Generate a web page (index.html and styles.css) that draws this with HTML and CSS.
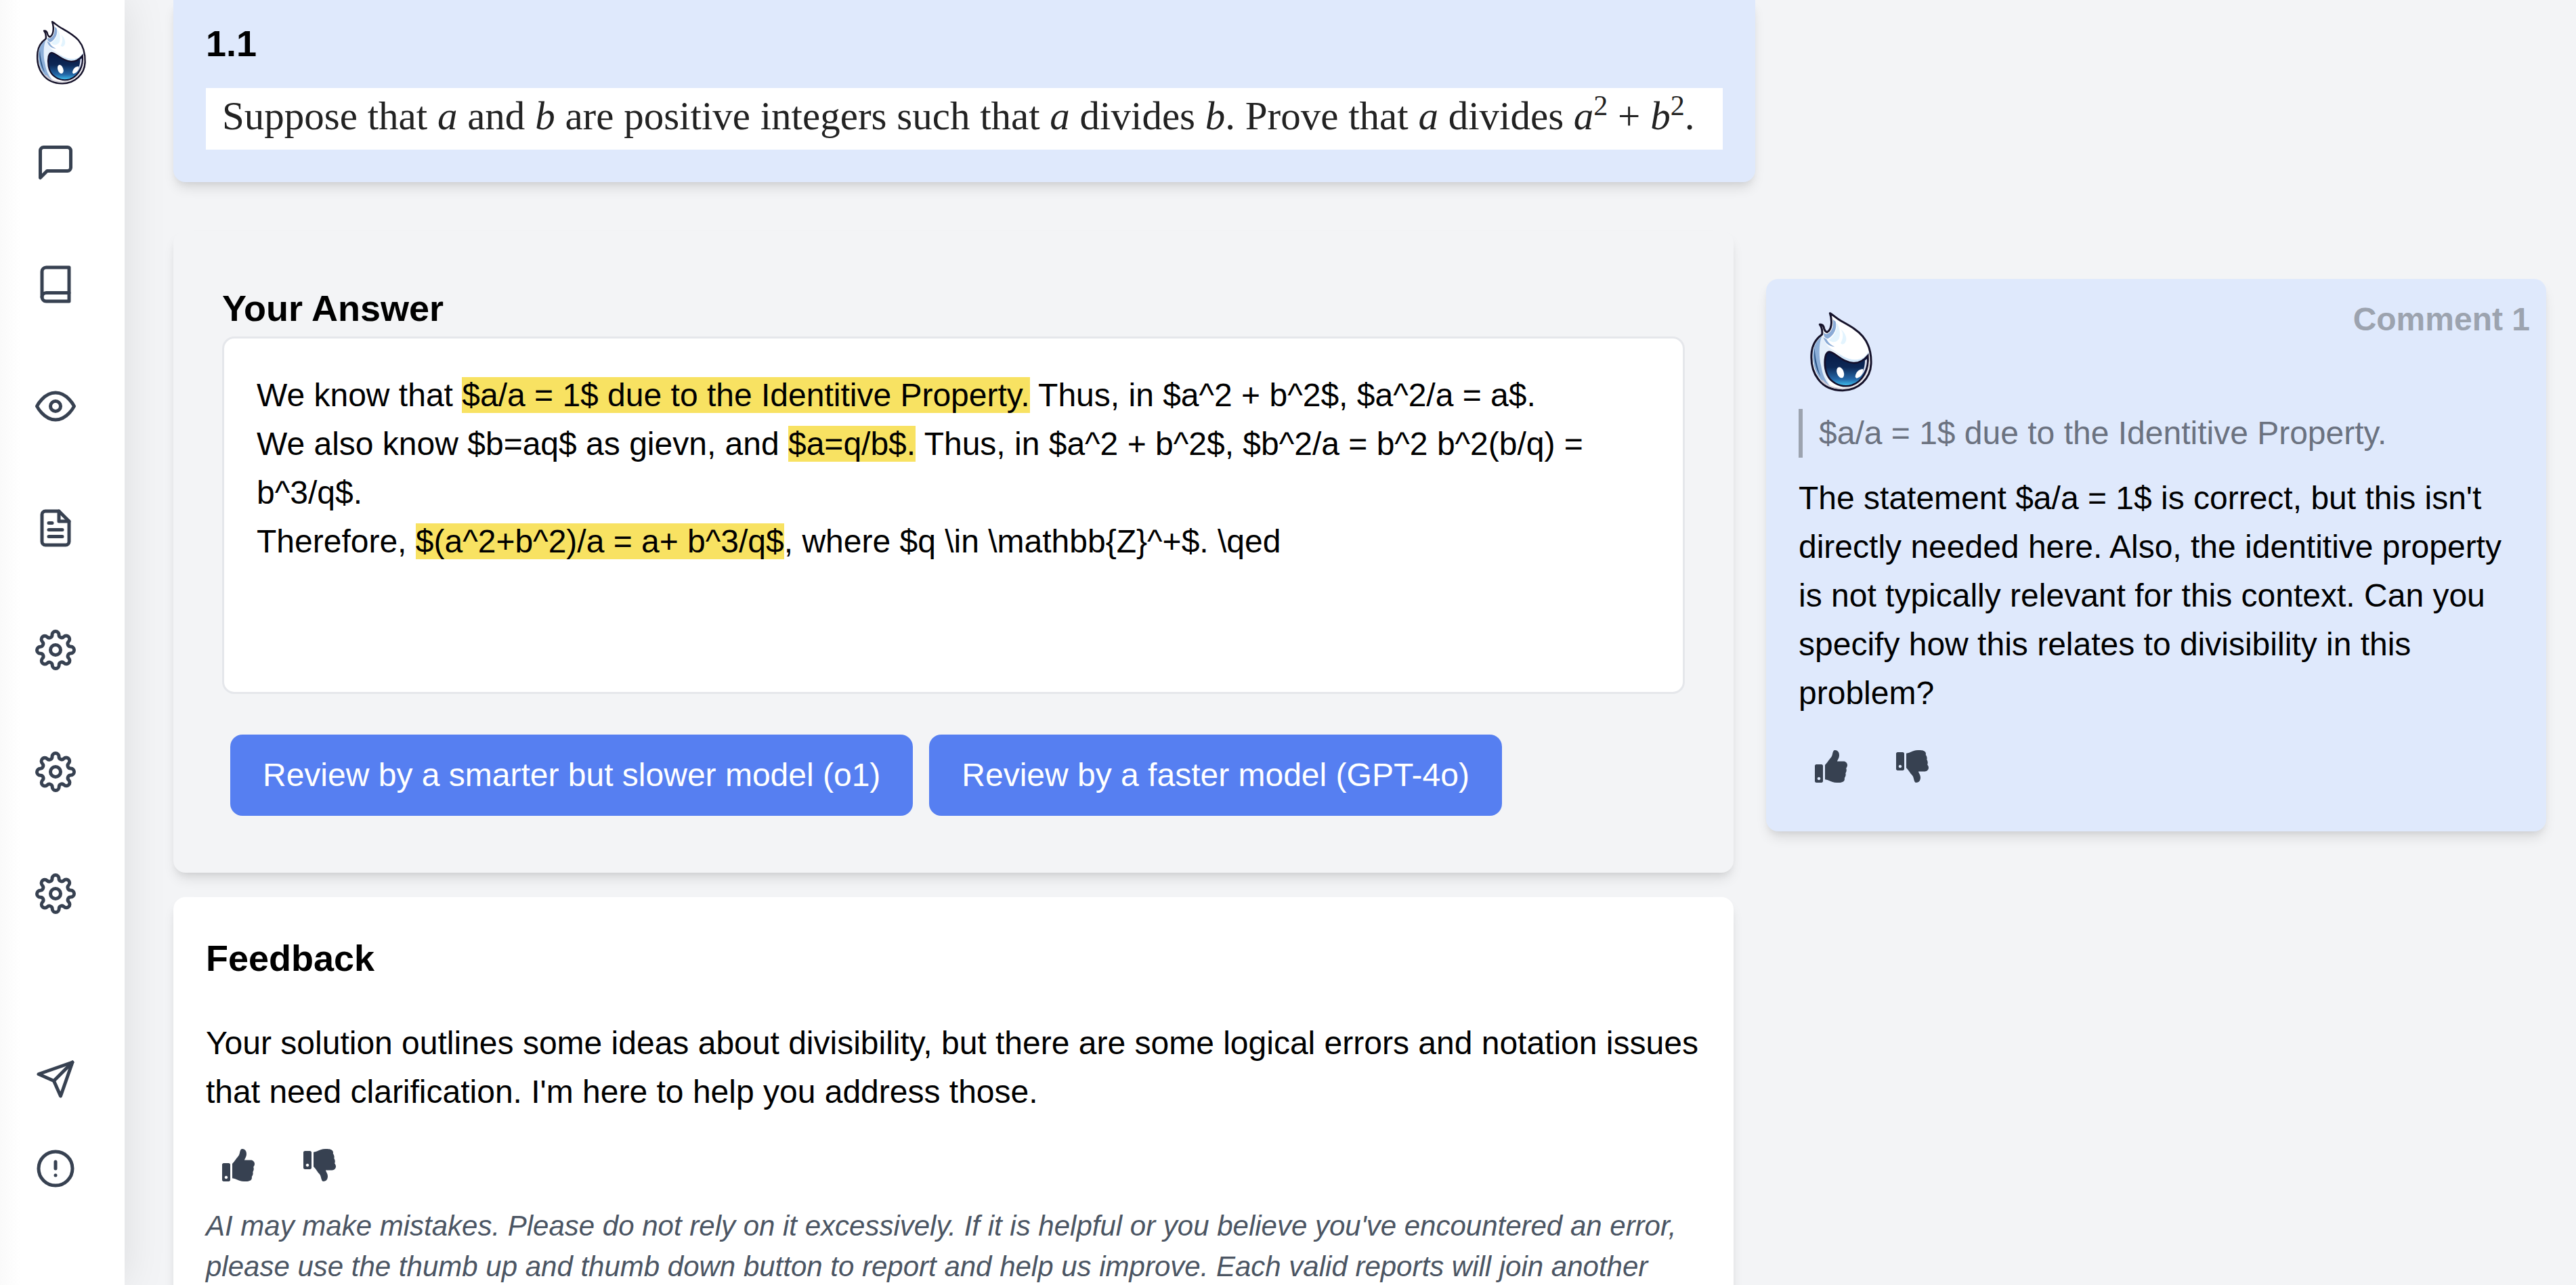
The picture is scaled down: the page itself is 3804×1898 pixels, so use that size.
FILE: index.html
```html
<!DOCTYPE html>
<html lang="en">
<head>
  <meta charset="UTF-8">
  <title>Problem 1.1</title>
  <link rel="stylesheet" href="styles.css">
</head>
<body>
  <!-- Shared drawings -->
  <svg class="defs" width="0" height="0" aria-hidden="true">
    <defs>
      <linearGradient id="visor" x1="0" y1="0" x2="0" y2="1">
        <stop offset="0" stop-color="#081a45"/>
        <stop offset="0.45" stop-color="#0d2856"/>
        <stop offset="0.8" stop-color="#2468a8"/>
        <stop offset="1" stop-color="#41c4f2"/>
      </linearGradient>
      <symbol id="logo" viewBox="48 63 360 360">
        <path d="M187 71C203 80 215 93 236 105C275 127 306 143 332 173C358 204 371 247 369 296C366 360 314 413 243 413C190 413 159 395 135 363C110 331 101 288 106 241C110 208 126 184 152 165C154 148 150 132 142 121C152 120 159 127 161 139C163 147 168 153 174 155C192 147 200 112 187 71Z" fill="#ffffff" stroke="#15122a" stroke-width="9" stroke-linejoin="round"/>
        <path d="M152 172C128 192 115 213 112 244C108 290 121 334 145 363C157 379 172 388 190 395C167 374 156 340 157 300C157 262 155 216 152 172Z" fill="#8caed8"/>
        <path d="M152 172C138 200 136 262 148 306C154 344 166 370 190 396C172 364 163 330 162 296C160 258 170 240 186 238C202 238 212 244 224 254C206 232 188 230 176 214C162 198 158 188 160 170Z" fill="#e4effb"/>
        <path d="M119 226C113 264 121 316 146 352C130 310 121 266 119 226Z" fill="#2c5687"/>
        <path d="M200 98C204 128 196 154 174 163C168 164 162 160 160 156C158 172 164 182 178 184C204 170 220 138 212 108Z" fill="#8aabd6"/>
        <path d="M158 178C166 206 182 216 208 220C190 212 178 200 172 186Z" fill="#8aabd6"/>
        <path d="M216 112C222 144 206 174 180 190C196 202 214 202 226 186C236 168 230 132 216 112Z" fill="#e3f4fe"/>
        <path d="M234 142C248 158 246 184 234 204C246 216 260 202 259 182C257 164 246 150 234 142Z" fill="#e3f4fe"/>
        <path d="M204 236C232 254 262 276 298 277C330 277 348 260 358 240C360 250 358 260 350 272C334 290 304 296 276 288C244 280 224 250 204 236Z" fill="#d2e8fa"/>
        <path d="M184 242C212 244 236 286 290 291C320 293 340 276 355 258C360 318 336 372 284 390C250 400 214 390 188 364C166 340 160 296 167 262C171 248 176 242 184 242Z" fill="url(#visor)" stroke="#130f2b" stroke-width="8"/>
        <path d="M342 280C342 304 336 332 316 356C340 338 352 308 351 274Z" fill="#dcdfee"/>
        <path d="M142 366C182 416 272 420 322 376C346 354 362 320 364 284C350 366 298 403 240 402C198 401 174 388 158 368Z" fill="#cdc9d4"/>
        <ellipse cx="233" cy="334" rx="15" ry="25" transform="rotate(-20 233 334)" fill="#ffffff"/>
        <path d="M299 353C300 334 314 318 334 318C334 338 320 358 304 359Z" fill="#ffffff"/>
      </symbol>
      <symbol id="gear" viewBox="0 0 24 24">
        <circle cx="12" cy="12" r="3"/>
        <path d="M19.4 15a1.65 1.65 0 0 0 .33 1.82l.06.06a2 2 0 0 1 0 2.83 2 2 0 0 1-2.83 0l-.06-.06a1.65 1.65 0 0 0-1.82-.33 1.65 1.65 0 0 0-1 1.51V21a2 2 0 0 1-2 2 2 2 0 0 1-2-2v-.09A1.65 1.65 0 0 0 9 19.4a1.65 1.65 0 0 0-1.82.33l-.06.06a2 2 0 0 1-2.83 0 2 2 0 0 1 0-2.83l.06-.06a1.65 1.65 0 0 0 .33-1.82 1.65 1.65 0 0 0-1.51-1H3a2 2 0 0 1-2-2 2 2 0 0 1 2-2h.09A1.65 1.65 0 0 0 4.6 9a1.65 1.65 0 0 0-.33-1.82l-.06-.06a2 2 0 0 1 0-2.83 2 2 0 0 1 2.83 0l.06.06a1.65 1.65 0 0 0 1.82.33H9a1.65 1.65 0 0 0 1-1.51V3a2 2 0 0 1 2-2 2 2 0 0 1 2 2v.09a1.65 1.65 0 0 0 1 1.51 1.65 1.65 0 0 0 1.82-.33l.06-.06a2 2 0 0 1 2.83 0 2 2 0 0 1 0 2.83l-.06.06a1.65 1.65 0 0 0-.33 1.82V9a1.65 1.65 0 0 0 1.51 1H21a2 2 0 0 1 2 2 2 2 0 0 1-2 2h-.09a1.65 1.65 0 0 0-1.51 1z"/>
      </symbol>
      <symbol id="thumb-up" viewBox="0 0 512 512">
        <path d="M104 224H24c-13.255 0-24 10.745-24 24v240c0 13.255 10.745 24 24 24h80c13.255 0 24-10.745 24-24V248c0-13.255-10.745-24-24-24zM64 472c-13.255 0-24-10.745-24-24s10.745-24 24-24 24 10.745 24 24-10.745 24-24 24zM384 81.452c0 42.416-25.97 66.208-33.277 94.548h101.723c33.397 0 59.397 27.746 59.553 58.098.084 17.938-7.546 37.249-19.439 49.197l-.11.11c9.836 23.337 8.237 56.037-9.308 79.469 8.681 25.895-.069 57.704-16.382 74.757 4.298 17.598 2.244 32.575-6.148 44.632C440.202 511.587 389.616 512 346.839 512l-2.845-.001c-48.287-.017-87.806-17.598-119.56-31.725-15.957-7.099-36.821-15.887-52.651-16.178-6.54-.12-11.783-5.457-11.783-11.998v-213.77c0-3.2 1.282-6.271 3.558-8.521 39.614-39.144 56.648-80.587 89.117-113.111 14.804-14.832 20.188-37.236 25.393-58.902C282.515 39.293 291.817 0 312 0c24 0 72 8 72 81.452z"/>
      </symbol>
      <symbol id="thumb-down" viewBox="0 0 512 512">
        <path d="M0 56v240c0 13.255 10.745 24 24 24h80c13.255 0 24-10.745 24-24V56c0-13.255-10.745-24-24-24H24C10.745 32 0 42.745 0 56zm40 200c0-13.255 10.745-24 24-24s24 10.745 24 24-10.745 24-24 24-24-10.745-24-24zm272 256c-20.183 0-29.485-39.293-33.931-57.795-5.206-21.666-10.589-44.07-25.393-58.902-32.469-32.524-49.503-73.967-89.117-113.111a11.98 11.98 0 0 1-3.558-8.521V59.901c0-6.541 5.243-11.878 11.783-11.998 15.831-.29 36.694-9.079 52.651-16.178C256.189 17.598 295.709.017 343.995 0h2.844c42.777 0 93.363.413 113.774 29.737 8.392 12.057 10.446 27.034 6.148 44.632 16.312 17.053 25.063 48.863 16.382 74.757 17.544 23.432 19.143 56.132 9.308 79.469l.11.11c11.893 11.949 19.523 31.259 19.439 49.197-.156 30.352-26.157 58.098-59.553 58.098H350.723C358.03 364.34 384 388.132 384 430.548 384 504 336 512 312 512z"/>
      </symbol>
    </defs>
  </svg>

  <!-- Sidebar -->
  <nav class="sidebar">
    <a class="home" href="#"><svg class="logo-small"><use href="#logo"/></svg></a>
    <div class="nav-links">
      <a href="#"><svg class="icon" viewBox="0 0 24 24"><path d="M21 15a2 2 0 0 1-2 2H7l-4 4V5a2 2 0 0 1 2-2h14a2 2 0 0 1 2 2z"/></svg></a>
      <a href="#"><svg class="icon" viewBox="0 0 24 24"><path d="M4 19.5A2.5 2.5 0 0 1 6.5 17H20"/><path d="M6.5 2H20v20H6.5A2.5 2.5 0 0 1 4 19.5v-15A2.5 2.5 0 0 1 6.5 2z"/></svg></a>
      <a href="#"><svg class="icon" viewBox="0 0 24 24"><path d="M1 12s4-8 11-8 11 8 11 8-4 8-11 8-11-8-11-8z"/><circle cx="12" cy="12" r="3"/></svg></a>
      <a href="#"><svg class="icon" viewBox="0 0 24 24"><path d="M14 2H6a2 2 0 0 0-2 2v16a2 2 0 0 0 2 2h12a2 2 0 0 0 2-2V8z"/><path d="M14 2v6h6M16 13H8M16 17H8M10 9H8"/></svg></a>
      <a href="#"><svg class="icon"><use href="#gear"/></svg></a>
      <a href="#"><svg class="icon"><use href="#gear"/></svg></a>
      <a href="#"><svg class="icon"><use href="#gear"/></svg></a>
    </div>
    <div class="nav-bottom">
      <a href="#"><svg class="icon" viewBox="0 0 24 24"><path d="M22 2L11 13"/><path d="M22 2L15 22L11 13L2 9L22 2z"/></svg></a>
      <a href="#"><svg class="icon" viewBox="0 0 24 24"><circle cx="12" cy="12" r="10"/><path d="M12 8v4M12 16h.01"/></svg></a>
    </div>
  </nav>

  <main>
    <!-- Problem -->
    <section class="problem">
      <h2>1.1</h2>
      <p class="statement">Suppose that <i>a</i> and <i>b</i> are positive integers such that <i>a</i> divides <i>b</i>. Prove that <i>a</i> divides <i>a</i><sup>2</sup> + <i>b</i><sup>2</sup>.</p>
    </section>

    <div class="columns">
      <div class="work">
        <!-- Answer -->
        <section class="answer">
          <h2 id="answer-label">Your Answer</h2>
          <div class="answer-box" contenteditable="true" role="textbox" aria-labelledby="answer-label" spellcheck="false">We know that <mark>$a/a = 1$ due to the Identitive Property.</mark> Thus, in $a^2 + b^2$, $a^2/a = a$.<br>
            We also know $b=aq$ as gievn, and <mark>$a=q/b$.</mark> Thus, in $a^2 + b^2$, $b^2/a = b^2 b^2(b/q) = b^3/q$.<br>
            Therefore, <mark>$(a^2+b^2)/a = a+ b^3/q$</mark>, where $q \in \mathbb{Z}^+$. \qed</div>
          <div class="actions">
            <button class="review">Review by a smarter but slower model (o1)</button>
            <button class="review">Review by a faster model (GPT-4o)</button>
          </div>
        </section>

        <!-- Feedback -->
        <section class="feedback">
          <h2>Feedback</h2>
          <p class="feedback-text">Your solution outlines some ideas about divisibility, but there are some logical errors and notation issues that need clarification. I'm here to help you address those.</p>
          <div class="votes">
            <button class="vote" aria-label="Thumb up"><svg><use href="#thumb-up"/></svg></button>
            <button class="vote" aria-label="Thumb down"><svg><use href="#thumb-down"/></svg></button>
          </div>
          <p class="note">AI may make mistakes. Please do not rely on it excessively. If it is helpful or you believe you've encountered an error, please use the thumb up and thumb down button to report and help us improve. Each valid reports will join another</p>
        </section>
      </div>

      <!-- Comments -->
      <aside class="comments">
        <article class="comment">
          <div class="comment-head">
            <svg class="logo-large"><use href="#logo"/></svg>
            <h3>Comment 1</h3>
          </div>
          <blockquote>$a/a = 1$ due to the Identitive Property.</blockquote>
          <p>The statement $a/a = 1$ is correct, but this isn't directly needed here. Also, the identitive property is not typically relevant for this context. Can you specify how this relates to divisibility in this problem?</p>
          <div class="votes">
            <button class="vote" aria-label="Thumb up"><svg><use href="#thumb-up"/></svg></button>
            <button class="vote" aria-label="Thumb down"><svg><use href="#thumb-down"/></svg></button>
          </div>
        </article>
      </aside>
    </div>
  </main>
</body>
</html>
```

FILE: styles.css
```css
* {
  box-sizing: border-box;
}

body {
  display: flex;
  height: 100vh;
  margin: 0;
  overflow: hidden;
  background-color: #f3f4f6;
  color: #000;
  font-family: "Liberation Sans", Arial, sans-serif;
  font-size: 48px;
  line-height: 72px;
}

h2, h3, p, blockquote {
  margin: 0;
}

h2 {
  font-size: 54px;
  line-height: 84px;
}

svg {
  display: block;
}

.defs {
  position: absolute;
}

/* Sidebar */
.sidebar {
  display: flex;
  flex-direction: column;
  flex: none;
  width: 184px;
  height: 100vh;
  padding: 30px 0 130px 40px;
  background: linear-gradient(to right, #fafafa, #fff 30px);
  box-shadow: 0 0 60px rgba(0, 0, 0, 0.1);
}

.logo-small {
  width: 96px;
  height: 96px;
}

.nav-links {
  display: flex;
  flex-direction: column;
  gap: 96px;
  margin-top: 72px;
}

.nav-bottom {
  display: flex;
  flex-direction: column;
  gap: 48px;
  margin-top: auto;
}

.nav-links a, .nav-bottom a {
  padding: 12px;
}

.icon {
  width: 60px;
  height: 60px;
  fill: none;
  stroke: #374151;
  stroke-width: 2;
  stroke-linecap: round;
  stroke-linejoin: round;
}

/* Content */
main {
  flex: 1;
  min-width: 0;
  padding: 0 44px 0 72px;
}

.problem, .answer, .feedback, .comment {
  border-radius: 18px;
  box-shadow: 0 12px 18px -3px rgba(0, 0, 0, 0.1), 0 6px 12px -6px rgba(0, 0, 0, 0.1);
}

.problem {
  width: calc(100% * 2 / 3);
  padding: 22px 48px 48px;
  border-radius: 0 0 18px 18px;
  background-color: #dfe9fc;
}

.statement {
  margin-top: 24px;
  padding: 5px 24px 14px;
  background-color: #fff;
  color: #222;
  font-family: "Liberation Serif", "Times New Roman", serif;
  font-size: 59px;
  white-space: nowrap;
}

.statement sup {
  font-size: 42px;
  line-height: 0;
}

.columns {
  display: flex;
  align-items: flex-start;
  gap: 48px;
  margin-top: 72px;
}

.work {
  display: flex;
  flex-direction: column;
  flex: 2 1 0;
  gap: 36px;
  min-width: 0;
}

.answer {
  padding: 72px;
  background-color: #f3f4f6;
}

.answer-box {
  min-height: 528px;
  padding: 48px;
  border: 3px solid #e5e7eb;
  border-radius: 18px;
  background-color: #fff;
}

mark {
  background-color: #f8e262;
  color: inherit;
}

.actions {
  display: flex;
  gap: 24px;
  margin-top: 48px;
  padding: 12px;
}

.review {
  padding: 24px 48px;
  border: none;
  border-radius: 18px;
  background-color: #567ff1;
  color: #fff;
  font: inherit;
  cursor: pointer;
}

.feedback {
  padding: 48px;
  background-color: #fff;
}

.feedback-text {
  margin-top: 48px;
}

.votes {
  display: flex;
  gap: 24px;
  margin-top: 24px;
}

.vote {
  padding: 24px;
  border: none;
  background: none;
  cursor: pointer;
}

.vote svg {
  width: 48px;
  height: 48px;
  fill: #374151;
}

.note {
  margin-top: 12px;
  color: #4b5563;
  font-size: 42px;
  font-style: italic;
  line-height: 60px;
}

/* Comments */
.comments {
  flex: 1 1 0;
  min-width: 0;
  padding-top: 71px;
}

.comment {
  position: relative;
  padding: 48px;
  background-color: #dfe9fc;
}

.comment h3 {
  position: absolute;
  top: 24px;
  right: 24px;
  color: #9ca3af;
  font-size: 48px;
}

.logo-large {
  width: 120px;
  height: 120px;
}

blockquote {
  margin: 24px 0;
  padding-left: 24px;
  border-left: 6px solid #9ca3af;
  color: #6b7280;
}
```
